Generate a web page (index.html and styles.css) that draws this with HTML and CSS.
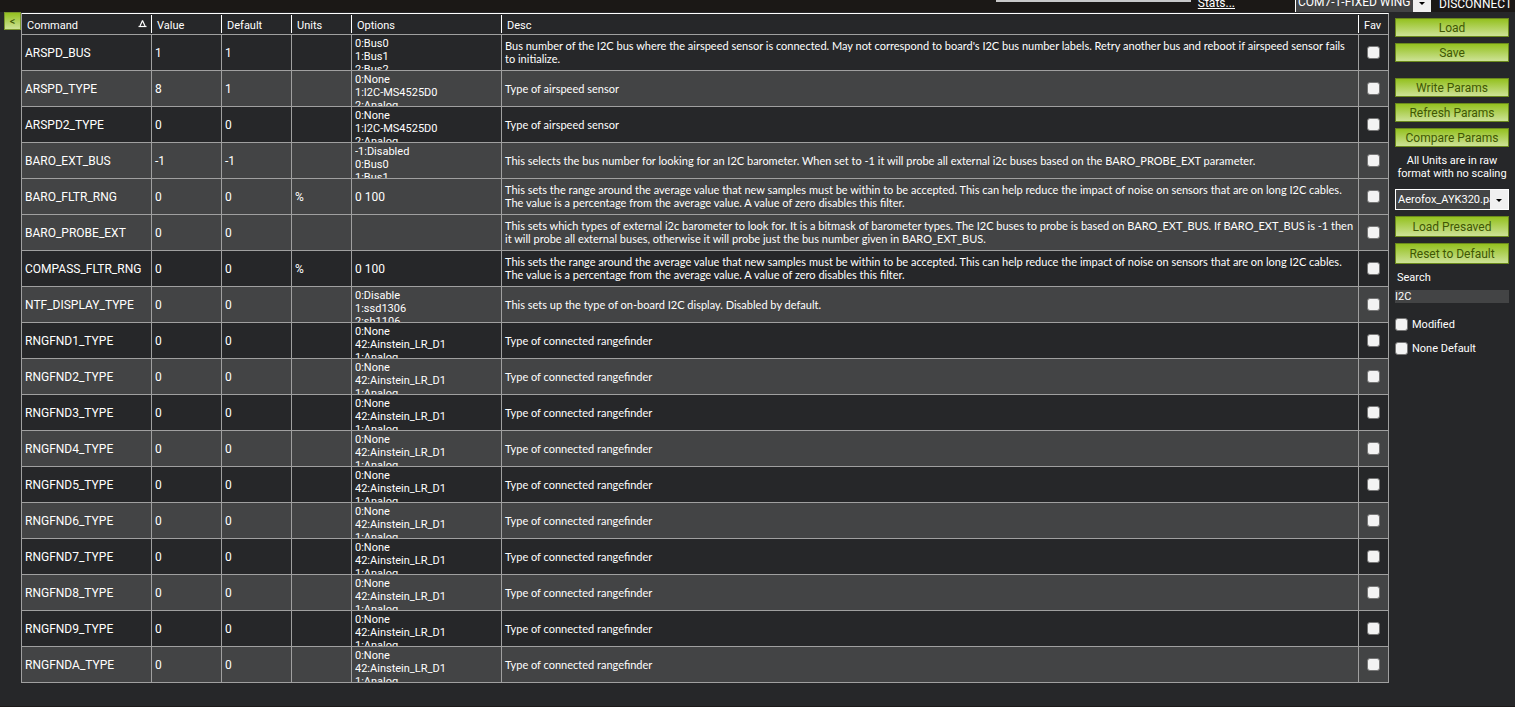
FILE: index.html
```html
<!DOCTYPE html>
<html lang="en">

<head>
    <meta charset="UTF-8">
    <meta name="viewport" content="width=device-width, initial-scale=1.0">
    <title>Full Parameter List</title>
    <link rel="stylesheet" href="styles.css">
</head>

<body>
    <header class="topbar">
        <div class="progress"></div>
        <a class="stats" href="#">Stats...</a>
        <div class="dropdown port">
            <select id="port" aria-labelledby="port">
                <option>COM7-1-FIXED WING</option>
            </select>
        </div>
        <a class="disconnect" href="#">DISCONNECT</a>
    </header>

    <main class="content">
        <button class="collapse" type="button">&lt;</button>

        <table class="params">
            <colgroup>
                <col class="col-command">
                <col class="col-value">
                <col class="col-value">
                <col class="col-units">
                <col class="col-options">
                <col>
                <col class="col-fav">
            </colgroup>
            <thead>
                <tr>
                    <th>
                        <div class="sorted">Command
                            <svg width="9" height="8" viewBox="0 0 9 8">
                                <path d="M4.5 0.5 L2 6 M4.5 0.5 L7 6" fill="none" stroke="#fff" stroke-width="1.2" />
                                <path d="M0.5 6.5 H8.5" stroke="#fff" stroke-width="1.2" />
                            </svg>
                        </div>
                    </th>
                    <th>Value</th>
                    <th>Default</th>
                    <th>Units</th>
                    <th>Options</th>
                    <th>Desc</th>
                    <th id="fav">Fav</th>
                </tr>
            </thead>
            <tbody>
                <tr>
                    <td>ARSPD_BUS</td>
                    <td>1</td>
                    <td>1</td>
                    <td></td>
                    <td class="opt"><div>0:Bus0<br>1:Bus1<br>2:Bus2</div></td>
                    <td class="desc">Bus number of the I2C bus where the airspeed sensor is connected. May not correspond to board's I2C bus number labels. Retry another bus and reboot if airspeed sensor fails to initialize.</td>
                    <td class="fav"><input type="checkbox" aria-labelledby="fav"></td>
                </tr>
                <tr class="light">
                    <td>ARSPD_TYPE</td>
                    <td>8</td>
                    <td>1</td>
                    <td></td>
                    <td class="opt"><div>0:None<br>1:I2C-MS4525D0<br>2:Analog</div></td>
                    <td class="desc">Type of airspeed sensor</td>
                    <td class="fav"><input type="checkbox" aria-labelledby="fav"></td>
                </tr>
                <tr>
                    <td>ARSPD2_TYPE</td>
                    <td>0</td>
                    <td>0</td>
                    <td></td>
                    <td class="opt"><div>0:None<br>1:I2C-MS4525D0<br>2:Analog</div></td>
                    <td class="desc">Type of airspeed sensor</td>
                    <td class="fav"><input type="checkbox" aria-labelledby="fav"></td>
                </tr>
                <tr class="light">
                    <td>BARO_EXT_BUS</td>
                    <td>-1</td>
                    <td>-1</td>
                    <td></td>
                    <td class="opt"><div>-1:Disabled<br>0:Bus0<br>1:Bus1</div></td>
                    <td class="desc">This selects the bus number for looking for an I2C barometer. When set to -1 it will probe all external i2c buses based on the BARO_PROBE_EXT parameter.</td>
                    <td class="fav"><input type="checkbox" aria-labelledby="fav"></td>
                </tr>
                <tr class="light">
                    <td>BARO_FLTR_RNG</td>
                    <td>0</td>
                    <td>0</td>
                    <td>%</td>
                    <td>0 100</td>
                    <td class="desc">This sets the range around the average value that new samples must be within to be accepted. This can help reduce the impact of noise on sensors that are on long I2C cables. The value is a percentage from the average value. A value of zero disables this filter.</td>
                    <td class="fav"><input type="checkbox" aria-labelledby="fav"></td>
                </tr>
                <tr class="light">
                    <td>BARO_PROBE_EXT</td>
                    <td>0</td>
                    <td>0</td>
                    <td></td>
                    <td></td>
                    <td class="desc">This sets which types of external i2c barometer to look for. It is a bitmask of barometer types. The I2C buses to probe is based on BARO_EXT_BUS. If BARO_EXT_BUS is -1 then it will probe all external buses, otherwise it will probe just the bus number given in BARO_EXT_BUS.</td>
                    <td class="fav"><input type="checkbox" aria-labelledby="fav"></td>
                </tr>
                <tr>
                    <td>COMPASS_FLTR_RNG</td>
                    <td>0</td>
                    <td>0</td>
                    <td>%</td>
                    <td>0 100</td>
                    <td class="desc">This sets the range around the average value that new samples must be within to be accepted. This can help reduce the impact of noise on sensors that are on long I2C cables. The value is a percentage from the average value. A value of zero disables this filter.</td>
                    <td class="fav"><input type="checkbox" aria-labelledby="fav"></td>
                </tr>
                <tr class="light">
                    <td>NTF_DISPLAY_TYPE</td>
                    <td>0</td>
                    <td>0</td>
                    <td></td>
                    <td class="opt"><div>0:Disable<br>1:ssd1306<br>2:sh1106</div></td>
                    <td class="desc">This sets up the type of on-board I2C display. Disabled by default.</td>
                    <td class="fav"><input type="checkbox" aria-labelledby="fav"></td>
                </tr>
                <tr>
                    <td>RNGFND1_TYPE</td>
                    <td>0</td>
                    <td>0</td>
                    <td></td>
                    <td class="opt"><div>0:None<br>42:Ainstein_LR_D1<br>1:Analog</div></td>
                    <td class="desc">Type of connected rangefinder</td>
                    <td class="fav"><input type="checkbox" aria-labelledby="fav"></td>
                </tr>
                <tr class="light">
                    <td>RNGFND2_TYPE</td>
                    <td>0</td>
                    <td>0</td>
                    <td></td>
                    <td class="opt"><div>0:None<br>42:Ainstein_LR_D1<br>1:Analog</div></td>
                    <td class="desc">Type of connected rangefinder</td>
                    <td class="fav"><input type="checkbox" aria-labelledby="fav"></td>
                </tr>
                <tr>
                    <td>RNGFND3_TYPE</td>
                    <td>0</td>
                    <td>0</td>
                    <td></td>
                    <td class="opt"><div>0:None<br>42:Ainstein_LR_D1<br>1:Analog</div></td>
                    <td class="desc">Type of connected rangefinder</td>
                    <td class="fav"><input type="checkbox" aria-labelledby="fav"></td>
                </tr>
                <tr class="light">
                    <td>RNGFND4_TYPE</td>
                    <td>0</td>
                    <td>0</td>
                    <td></td>
                    <td class="opt"><div>0:None<br>42:Ainstein_LR_D1<br>1:Analog</div></td>
                    <td class="desc">Type of connected rangefinder</td>
                    <td class="fav"><input type="checkbox" aria-labelledby="fav"></td>
                </tr>
                <tr>
                    <td>RNGFND5_TYPE</td>
                    <td>0</td>
                    <td>0</td>
                    <td></td>
                    <td class="opt"><div>0:None<br>42:Ainstein_LR_D1<br>1:Analog</div></td>
                    <td class="desc">Type of connected rangefinder</td>
                    <td class="fav"><input type="checkbox" aria-labelledby="fav"></td>
                </tr>
                <tr class="light">
                    <td>RNGFND6_TYPE</td>
                    <td>0</td>
                    <td>0</td>
                    <td></td>
                    <td class="opt"><div>0:None<br>42:Ainstein_LR_D1<br>1:Analog</div></td>
                    <td class="desc">Type of connected rangefinder</td>
                    <td class="fav"><input type="checkbox" aria-labelledby="fav"></td>
                </tr>
                <tr>
                    <td>RNGFND7_TYPE</td>
                    <td>0</td>
                    <td>0</td>
                    <td></td>
                    <td class="opt"><div>0:None<br>42:Ainstein_LR_D1<br>1:Analog</div></td>
                    <td class="desc">Type of connected rangefinder</td>
                    <td class="fav"><input type="checkbox" aria-labelledby="fav"></td>
                </tr>
                <tr class="light">
                    <td>RNGFND8_TYPE</td>
                    <td>0</td>
                    <td>0</td>
                    <td></td>
                    <td class="opt"><div>0:None<br>42:Ainstein_LR_D1<br>1:Analog</div></td>
                    <td class="desc">Type of connected rangefinder</td>
                    <td class="fav"><input type="checkbox" aria-labelledby="fav"></td>
                </tr>
                <tr>
                    <td>RNGFND9_TYPE</td>
                    <td>0</td>
                    <td>0</td>
                    <td></td>
                    <td class="opt"><div>0:None<br>42:Ainstein_LR_D1<br>1:Analog</div></td>
                    <td class="desc">Type of connected rangefinder</td>
                    <td class="fav"><input type="checkbox" aria-labelledby="fav"></td>
                </tr>
                <tr class="light">
                    <td>RNGFNDA_TYPE</td>
                    <td>0</td>
                    <td>0</td>
                    <td></td>
                    <td class="opt"><div>0:None<br>42:Ainstein_LR_D1<br>1:Analog</div></td>
                    <td class="desc">Type of connected rangefinder</td>
                    <td class="fav"><input type="checkbox" aria-labelledby="fav"></td>
                </tr>
            </tbody>
        </table>

        <aside class="sidebar">
            <div class="group file">
                <button class="btn" type="button">Load</button>
                <button class="btn" type="button">Save</button>
            </div>
            <div class="group">
                <button class="btn" type="button">Write Params</button>
                <button class="btn" type="button">Refresh Params</button>
                <button class="btn" type="button">Compare Params</button>
            </div>
            <p class="note">All Units are in raw format with no scaling</p>
            <div class="group">
                <div class="dropdown">
                    <select id="preset" aria-labelledby="preset">
                        <option>Aerofox_AYK320.param</option>
                    </select>
                </div>
                <button class="btn tall" type="button">Load Presaved</button>
                <button class="btn tall" type="button">Reset to Default</button>
            </div>
            <label class="search-label" for="search">Search</label>
            <input class="search" id="search" type="text" value="I2C">
            <label class="check"><input type="checkbox">Modified</label>
            <label class="check"><input type="checkbox">None Default</label>
        </aside>
    </main>
</body>

</html>
```
FILE: styles.css
```css
* {
    box-sizing: border-box;
    margin: 0;
    padding: 0;
}

body {
    display: flex;
    flex-direction: column;
    min-height: 100vh;
    background-color: #262729;
    border-bottom: 1px solid #1c1918;
    color: #fff;
    font-family: Roboto, "Liberation Sans", sans-serif;
    font-size: 11px;
    line-height: 13px;
}

button,
input,
select {
    font: inherit;
    color: inherit;
}

/* top bar */
.topbar {
    display: flex;
    justify-content: flex-end;
    align-items: flex-end;
    height: 12px;
    padding-right: 6px;
    overflow: hidden;
    background-color: #1b1816;
    font-size: 12px;
}

.progress {
    align-self: flex-start;
    width: 195px;
    height: 2px;
    margin-right: 7px;
    background-color: #c8c8c8;
}

.topbar a {
    color: #fff;
}

.stats {
    margin-right: 60px;
    padding-bottom: 2px;
}

.disconnect {
    width: 70px;
    padding-bottom: 1px;
    margin-left: 8px;
    text-decoration: none;
}

/* drop-downs */
.dropdown {
    position: relative;
    border: 1px solid #fff;
    background-color: #434445;
}

.dropdown select {
    display: block;
    width: 100%;
    height: 19px;
    padding: 0 18px 0 2px;
    border: 0;
    appearance: none;
    background: linear-gradient(#f0f0f0, #f0f0f0) right / 18px 100% no-repeat;
}

.dropdown::after {
    content: "";
    position: absolute;
    right: 6px;
    top: 9px;
    border: 3px solid transparent;
    border-top-color: #000;
    border-bottom: 0;
}

.port {
    flex: none;
    width: 136px;
    border-width: 0 0 0 1px;
}

/* main */
.content {
    display: flex;
    align-items: flex-start;
    flex: 1;
    padding: 0 6px 0 4px;
}

.collapse {
    width: 17px;
    height: 18px;
    border: 1px solid #79962c;
    background: linear-gradient(#94c11f, #cde296);
    color: #405704;
}

/* parameter table */
.params {
    flex: 1;
    table-layout: fixed;
    width: 0;
    margin-top: 1px;
    border-spacing: 0;
    border-left: 1px solid #a0a0a0;
}

.col-command {
    width: 130px;
}

.col-value {
    width: 70px;
}

.col-units {
    width: 60px;
}

.col-options {
    width: 150px;
}

.col-fav {
    width: 30px;
}

.params th {
    height: 22px;
    padding: 2px 5px 0;
    border-top: 1px solid #fff;
    border-bottom: 1px solid #a0a0a0;
    background: linear-gradient(#fff, #fff) right center / 1px 18px no-repeat;
    font-weight: normal;
    text-align: left;
}

.params th:last-child {
    border-right: 1px solid #a0a0a0;
    background: none;
}

.sorted {
    display: flex;
    justify-content: space-between;
    align-items: center;
}

.sorted svg {
    margin-bottom: 2px;
}

.params td {
    height: 36px;
    padding: 2px 3px 0;
    border-right: 1px solid #a0a0a0;
    border-bottom: 1px solid #a0a0a0;
    font-size: 12px;
}

.params .light {
    background-color: #434445;
}

.params .desc,
.params .opt {
    font-size: 11px;
}

.params .desc {
    padding: 0 3px 1px;
    font-family: Lato, "Liberation Sans", sans-serif;
}

.opt div {
    height: 33px;
    overflow: hidden;
    white-space: nowrap;
}

.params .fav {
    padding-top: 0;
    text-align: center;
}

input[type="checkbox"] {
    width: 13px;
    height: 13px;
    border: 1px solid #777;
    border-radius: 3px;
    appearance: none;
    background-color: #f3f3f3;
    vertical-align: middle;
}

/* sidebar */
.sidebar {
    display: flex;
    flex-direction: column;
    width: 114px;
    margin-left: 6px;
    padding-top: 6px;
}

.group {
    display: flex;
    flex-direction: column;
    gap: 6px;
}

.file {
    margin-bottom: 16px;
}

.btn {
    height: 19px;
    padding-top: 2px;
    border: 1px solid #6b8a1c;
    background: linear-gradient(#94c11f, #cde296);
    color: #405704;
    font-size: 12px;
}

.tall {
    height: 21px;
}

.note {
    margin: 7px 0 9px;
    text-align: center;
}

.search-label {
    margin: 7px 2px 6px;
}

.search {
    width: 100%;
    height: 13px;
    margin-bottom: 15px;
    border: 0;
    background-color: #434445;
}

.check {
    display: flex;
    align-items: center;
    gap: 4px;
    margin-bottom: 11px;
}
```
